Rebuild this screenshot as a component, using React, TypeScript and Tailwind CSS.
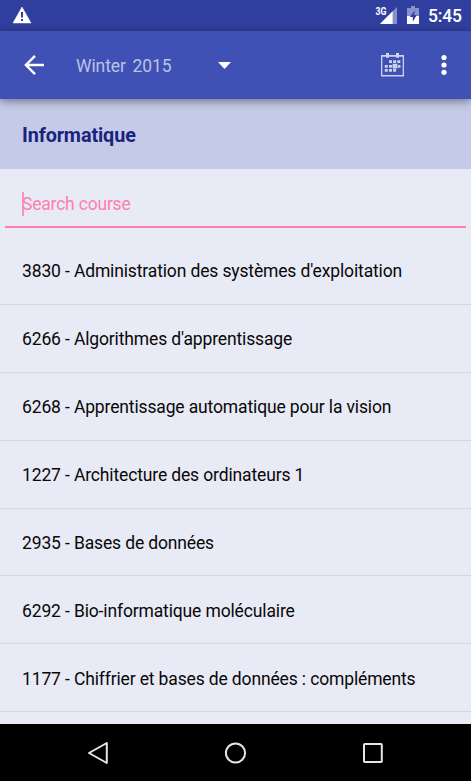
const courses = [
  { label: "3830 - Administration des systèmes d'exploitation", row: "h-[68px] pt-px" },
  { label: "6266 - Algorithmes d'apprentissage", row: "h-[68px] pt-px" },
  { label: "6268 - Apprentissage automatique pour la vision", row: "h-[68px] pt-px" },
  { label: "1227 - Architecture des ordinateurs 1", row: "h-[68px] pt-px" },
  { label: "2935 - Bases de données", row: "h-[67px] pt-[3px]" },
  { label: "6292 - Bio-informatique moléculaire", row: "h-[68px] pt-[3px]" },
  { label: "1177 - Chiffrier et bases de données : compléments", row: "h-[68px] pt-[3px]" },
];

function StatusBar() {
  return (
    <div className="flex h-[31px] shrink-0 items-start bg-[#303f9f] text-white">
      <svg className="ml-3 mt-1.5 h-[18px] w-5" viewBox="0 0 20 18">
        <path d="M10 1 19 17H1Z" fill="#fff" stroke="#fff" strokeWidth=".5" strokeLinejoin="round" />
        <path d="M9 6h2v5.5H9zM9 13h2v2H9z" fill="#303f9f" />
      </svg>
      <svg className="ml-auto h-[31px] w-6" viewBox="0 0 24 31" fontFamily="Roboto, sans-serif">
        <path d="M22 7v17H5z" fill="#8790c7" />
        <path d="M17.6 11.2V24H5z" fill="#fff" />
        <text x="0.4" y="14.6" fontSize="10" fontWeight="700" textLength="11" lengthAdjust="spacingAndGlyphs" fill="#fff">3G</text>
      </svg>
      <svg className="ml-2 h-[31px] w-3" viewBox="0 0 12 31">
        <path d="M4 6h4v2h4v8H0V8h4z" fill="#8790c7" />
        <path d="M0 16h12v8H0z" fill="#fff" />
        <path d="M8 10.3 2.8 17h3v4.8L9.8 15H7z" fill="#303f9f" />
      </svg>
      <span className="ml-[9px] mr-[10px] w-[33px] whitespace-nowrap pt-px text-[17.5px] font-medium leading-[31px] tracking-[-0.15px]">5:45</span>
    </div>
  );
}

function Toolbar() {
  return (
    <div className="relative z-10 flex h-[68px] shrink-0 items-center bg-[#3f51b5] shadow-[0_2px_9px_rgba(0,0,0,0.45)]">
      <svg className="ml-6 h-5 w-[21px]" viewBox="0 0 21 20" fill="none" stroke="#fff" strokeWidth="2.4">
        <path d="M11 .9 1.9 10l9.1 9.1M2 10h18" />
      </svg>
      <span className="ml-[31px] w-[142px] whitespace-nowrap pt-0.5 text-[17.5px] tracking-[-0.1px] text-[#bcc2e5] [word-spacing:2.5px]">Winter 2015</span>
      <svg className="h-[7px] w-[13px]" viewBox="0 0 13 7">
        <path d="M0 0h13L6.5 7z" fill="#fff" />
      </svg>
      <svg className="ml-[150px] h-6 w-6" viewBox="0 0 24 24" fill="#cdd2ed">
        <path d="M0 2h23v21.5H0zm1.3 1.8v18.2h20.4V3.8z" fillRule="evenodd" />
        <path d="M5 0h3v4.8H5zM15 0h3v4.8h-3zM8 7.3h3v2.8H8zM12.1 7.3h3v2.8h-3zM16.3 7.3h3v2.8h-3zM3.8 12h3v2.8h-3zM8 12h3v2.8H8zM17 12h2.5v2.8H17zM3.8 16h3v2.8h-3zM8 16h3v2.8H8zM12.1 16h3v2.8h-3zM11.6 10.8h4.8v4.6h-4.8z" />
      </svg>
      <svg className="ml-9 h-5 w-1.5" viewBox="0 0 6 20" fill="#fff">
        <circle cx="3" cy="2.6" r="2.6" />
        <circle cx="3" cy="10" r="2.6" />
        <circle cx="3" cy="17.3" r="2.6" />
      </svg>
    </div>
  );
}

function NavigationBar() {
  return (
    <div className="flex h-[57px] shrink-0 items-center bg-black pt-px">
      <svg className="ml-[87px] h-6 w-[22px]" viewBox="0 0 22 24" fill="none" stroke="#e5e5e5" strokeWidth="2">
        <path d="M19.8 2v20L2 12z" strokeLinejoin="round" />
      </svg>
      <svg className="ml-[115px] h-6 w-6" viewBox="0 0 24 24" fill="none" stroke="#e5e5e5" strokeWidth="2">
        <circle cx="11.5" cy="12" r="9.6" />
      </svg>
      <svg className="ml-[113px] h-6 w-6" viewBox="0 0 24 24" fill="none" stroke="#e5e5e5" strokeWidth="2">
        <rect x="3" y="3" width="17.8" height="18" rx=".7" />
      </svg>
    </div>
  );
}

export default function App() {
  return (
    <div className="flex h-[781px] w-[471px] flex-col overflow-hidden bg-[#e8eaf6] font-[Roboto,sans-serif]">
      <StatusBar />
      <Toolbar />
      <div className="flex h-[70px] shrink-0 items-center bg-[#c5cae9] pl-[22px] pt-1 text-[19.8px] font-bold tracking-[-0.1px] text-[#1a237e]">
        Informatique
      </div>
      <div className="mx-[5px] flex h-[59px] shrink-0 items-center border-b-2 border-[#ff80ab] pl-[17px] pt-[13px] text-[17.5px] tracking-[-0.2px] text-[#ff80ab]">
        <span className="h-6 w-0.5 bg-[#ff80ab]/80" />
        <span className="-ml-0.5">Search course</span>
      </div>
      <div className="mt-[9px] flex min-h-0 flex-1 flex-col">
        {courses.map((course) => (
          <div key={course.label} className={`flex shrink-0 items-center whitespace-nowrap border-b border-[#d3d5e1] pl-[22px] text-[17.5px] tracking-[-0.14px] text-[#080808] ${course.row}`}>
            {course.label}
          </div>
        ))}
      </div>
      <NavigationBar />
    </div>
  );
}
